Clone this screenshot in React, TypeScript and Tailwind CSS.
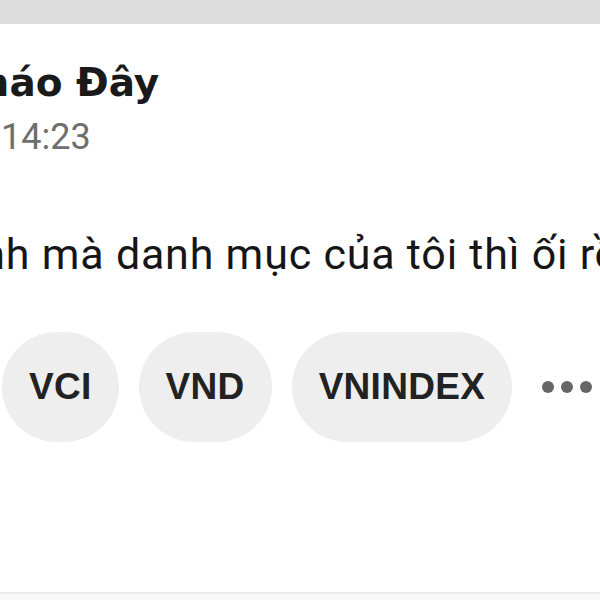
import React from "react";

const tickers = ["VCI", "VND", "VNINDEX"];

const App = () => {
  return (
    <div className="w-[600px] h-[600px] overflow-hidden bg-white flex flex-col" style={{ fontFamily: "Roboto, 'Noto Sans', sans-serif" }}>
      <div className="h-[24px] bg-[#dcdcdc] shrink-0" />
      <div className="flex-1 flex flex-col overflow-hidden">
        <div
          className="mt-[39px] ml-[-47px] whitespace-nowrap text-[39px] leading-[39px] font-bold text-[#1a1a1a]"
          style={{ fontFamily: "'DejaVu Sans', sans-serif" }}
        >
          Cháo Đây
        </div>
        <div className="mt-[17px] ml-[1px] whitespace-nowrap text-[36px] leading-[36px] text-[#6e6e6e]">
          14:23
        </div>
        <div className="mt-[78px] ml-[-92px] whitespace-nowrap text-[43px] leading-[43px] tracking-[0.8px] text-[#161616]">
          nhanh mà danh mục của tôi thì ối rồi
        </div>
        <div className="mt-[56px] flex items-center gap-[20px] ml-[2px]">
          {tickers.map((t) => (
            <div
              key={t}
              className="shrink-0 h-[110px] min-w-[115px] px-[27px] rounded-full bg-[#eeeeee] flex items-center justify-center text-[37px] tracking-[0.3px] font-bold text-[#222222]"
              style={{ fontFamily: "'Liberation Sans', Arial, sans-serif" }}
            >
              {t}
            </div>
          ))}
          <div className="shrink-0 ml-[10px] flex items-center gap-[7px]">
            <span className="w-[12px] h-[12px] rounded-full bg-[#666666]" />
            <span className="w-[12px] h-[12px] rounded-full bg-[#666666]" />
            <span className="w-[12px] h-[12px] rounded-full bg-[#666666]" />
          </div>
        </div>
        <div className="flex-1" />
        <div className="h-[2px] bg-[#ececec]" />
        <div className="h-[6px] bg-[#f8f8f8]" />
      </div>
    </div>
  );
};

export default App;
